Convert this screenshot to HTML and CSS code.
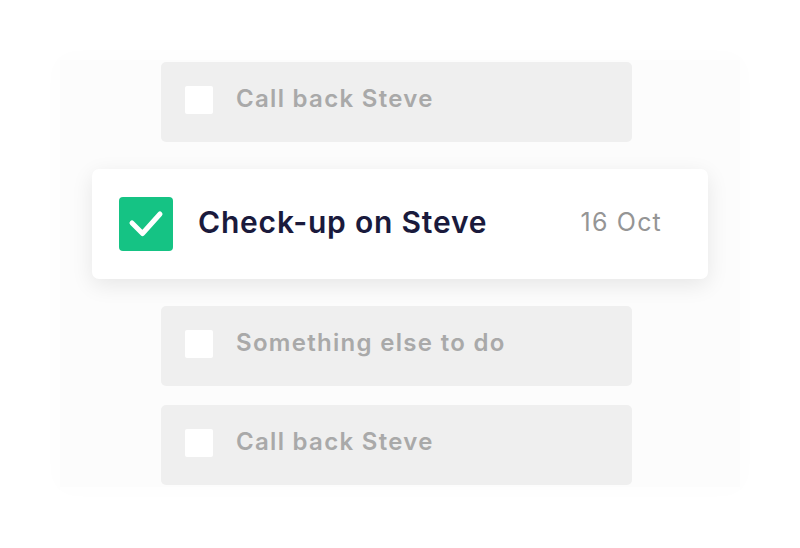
FILE: index.html
```html
<!DOCTYPE html>
<html>
<head>
<meta charset="utf-8">
<link rel="stylesheet" href="styles.css">
</head>
<body>
<div class="stage">
  <div class="panel">
    <div class="todo todo-1">
      <span class="box"></span>
      <span class="label">Call back Steve</span>
    </div>
    <div class="todo-main">
      <span class="check">
        <svg width="54" height="54" viewBox="0 0 54 54"><path d="M13 26 L23.5 36.5 L41 17" fill="none" stroke="#fff" stroke-width="5" stroke-linecap="round" stroke-linejoin="round"/></svg>
      </span>
      <span class="main-label">Check-up on Steve</span>
      <span class="date">16 Oct</span>
    </div>
    <div class="todo todo-3">
      <span class="box"></span>
      <span class="label">Something else to do</span>
    </div>
    <div class="todo todo-4">
      <span class="box"></span>
      <span class="label">Call back Steve</span>
    </div>
  </div>
</div>
</body>
</html>
```
FILE: styles.css
```css
html, body {
  margin: 0;
  padding: 0;
  background: #ffffff;
}
.stage {
  width: 800px;
  height: 548px;
  padding-top: 60px;
  box-sizing: border-box;
  font-family: "Inter", "Roboto", sans-serif;
}
.panel {
  width: 680px;
  margin-left: 60px;
  padding: 2px 0;
  background: #fcfcfc;
  box-shadow: 0 0 24px 4px #fdfdfd;
  display: flex;
  flex-direction: column;
  align-items: flex-start;
}
.todo {
  width: 471px;
  height: 80px;
  margin-left: 101px;
  background: #efefef;
  border-radius: 5px;
  display: flex;
  align-items: center;
  box-sizing: border-box;
  padding-left: 24px;
}
.box {
  width: 28px;
  height: 28px;
  background: #ffffff;
  border-radius: 2px;
  flex: none;
  margin-bottom: 4px;
}
.label {
  margin-left: 23px;
  padding-bottom: 6px;
  font-size: 24px;
  line-height: 30px;
  font-weight: 600;
  color: #a9a9a9;
  letter-spacing: 1.3px;
}
.todo-main {
  width: 616px;
  height: 110px;
  margin: 27px 0 27px 32px;
  background: #ffffff;
  border-radius: 7px;
  box-shadow: 0 6px 22px rgba(0, 0, 0, 0.09);
  display: flex;
  align-items: center;
  box-sizing: border-box;
  padding: 0 46px 0 27px;
}
.check {
  width: 54px;
  height: 54px;
  background: #15c384;
  border-radius: 4px;
  flex: none;
  display: flex;
}
.main-label {
  margin-left: 25px;
  padding-bottom: 4px;
  font-size: 30px;
  line-height: 36px;
  font-weight: 600;
  color: #1a1a3c;
  flex: 1;
  letter-spacing: 0.8px;
}
.date {
  padding-bottom: 4px;
  font-size: 25px;
  line-height: 30px;
  font-weight: 400;
  color: #959595;
  letter-spacing: 1.2px;
}
.todo-4 {
  margin-top: 19px;
}
```
